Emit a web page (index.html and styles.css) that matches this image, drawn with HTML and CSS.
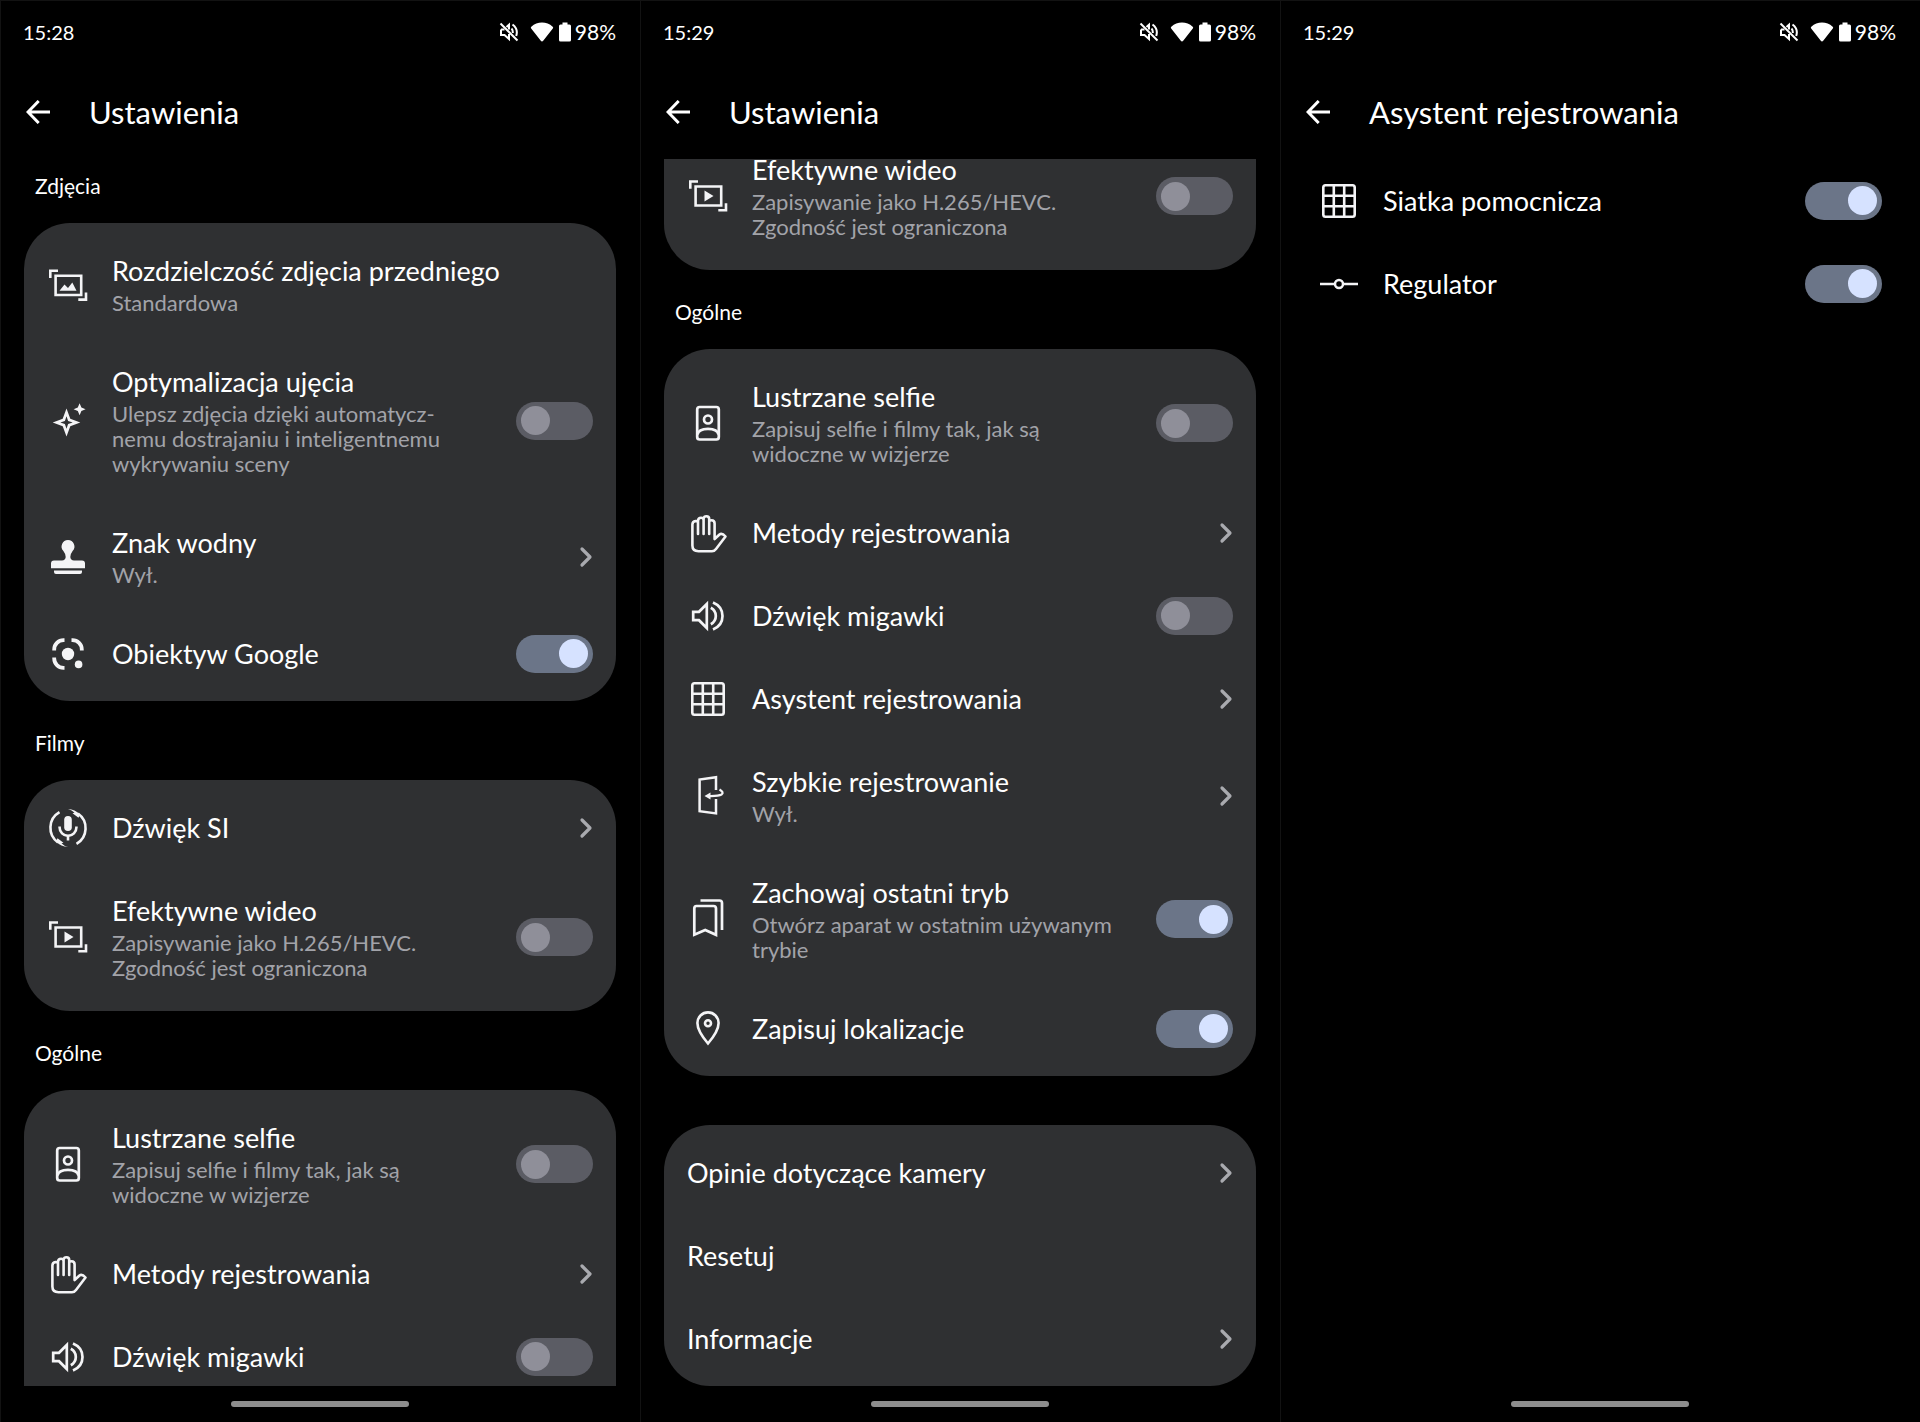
FILE: index.html
```html
<!DOCTYPE html>
<html lang="pl">
<head>
<meta charset="utf-8">
<meta name="viewport" content="width=device-width, initial-scale=1">
<title>Ustawienia aparatu</title>
<link rel="stylesheet" href="styles.css">
</head>
<body>
<svg class="sprite" aria-hidden="true">
  <symbol id="mute" viewBox="0 0 20 20"><g fill="none" stroke="currentColor" stroke-width="2"><path d="M2 7.500V13H5.500L10 17V12M2 7.500H5.500M7.500 5L10 2.800V7.500M12.500 6.500Q14 8 13.800 11M13.500 2.500Q19.500 7 17.200 14"/><path d="M1.500 1.500L18.500 18.500"/></g></symbol>
  <symbol id="wifi" viewBox="0 0 24 20"><path fill="currentColor" d="M12 19.500Q11.300 19.500 10.800 18.800L1 6.300Q.5 5.400 1.300 4.700Q6 .5 12 .5T22.700 4.700Q23.500 5.400 23 6.300L13.200 18.800Q12.700 19.500 12 19.500Z"/></symbol>
  <symbol id="battery" viewBox="0 0 12 20"><path fill="currentColor" d="M3.500 .5H8.500V2.500H10.500Q12 2.500 12 4V18Q12 19.500 10.500 19.500H1.500Q0 19.500 0 18V4Q0 2.500 1.500 2.500H3.500Z"/></symbol>
  <symbol id="back" viewBox="0 0 24 24"><path fill="none" stroke="currentColor" stroke-width="3" d="M24 12H2.500M12.700 1L2 12L12.700 23"/></symbol>
  <symbol id="chevron" viewBox="0 0 14 22"><path fill="none" stroke="currentColor" stroke-width="3.200" stroke-linecap="round" stroke-linejoin="round" d="M3 3L11 11L3 19"/></symbol>
  <symbol id="photo" viewBox="0 0 48 48"><g fill="none" stroke="currentColor" stroke-width="2.600"><path d="M11.600 14.800H37.200V34H11.600Z"/><path d="M14 9.800H6.300V17M42 31.500V38.600H34.300"/></g><path fill="currentColor" d="M15.500 29.800L20.500 23.500L24 27L28.300 21.500L32.500 29.800Z"/></symbol>
  <symbol id="video" viewBox="0 0 48 48"><g fill="none" stroke="currentColor" stroke-width="2.600"><path d="M11.600 14.500H37.200V33.500H11.600Z"/><path d="M14 9.500H6.300V16.700M42 31.200V38.300H34.300"/></g><path fill="currentColor" d="M20.500 18.600L29.500 24L20.500 29.400Z"/></symbol>
  <symbol id="sparkle" viewBox="0 0 48 48"><path fill="currentColor" fill-rule="evenodd" d="M22.500 11.500L26.300 21.700L36.300 25.500L26.300 29.300L22.500 39.500L18.700 29.300L8.700 25.500L18.700 21.700ZM22.500 19.200L20.900 23.900L16.300 25.500L20.900 27.100L22.500 31.800L24.100 27.100L28.700 25.500L24.100 23.900Z"/><path fill="currentColor" d="M35.600 6.300L37.400 10.500L41.600 12.300L37.400 14.100L35.600 18.300L33.800 14.100L29.600 12.300L33.800 10.500Z"/></symbol>
  <symbol id="stamp" viewBox="0 0 48 48"><path fill="currentColor" d="M24 7A6.500 6.500 0 0 1 28.600 18Q26 21.500 26.300 24Q26.600 27.300 30 27.600H38Q41 27.600 41 30.600V35.200H7V30.600Q7 27.600 10 27.600H18Q21.400 27.300 21.700 24Q22 21.500 19.400 18A6.500 6.500 0 0 1 24 7ZM10 37.500H38V39Q38 41 36 41H12Q10 41 10 39Z"/></symbol>
  <symbol id="lens" viewBox="0 0 48 48"><g fill="none" stroke="currentColor" stroke-width="3.800"><path d="M20.500 10.200H19.500A9.300 9.300 0 0 0 10.200 19.500V20.500M27.500 10.200H28.500A9.300 9.300 0 0 1 37.800 19.500V20.500M10.200 27.500V28.500A9.300 9.300 0 0 0 19.500 37.800H20.500"/></g><circle cx="24" cy="24" r="6.200" fill="currentColor"/><circle cx="34.600" cy="34.400" r="3.800" fill="currentColor"/></symbol>
  <symbol id="mic" viewBox="0 0 48 48"><rect x="20.200" y="12" width="7.600" height="15" rx="3.800" fill="currentColor"/><g fill="none" stroke="currentColor" stroke-width="2.600"><path d="M15.600 22.500V23.500A8.400 8.400 0 0 0 32.400 23.500V22.500M24 31.500V36.500"/><path d="M15.500 8.200A18 18 0 0 0 14 38.500M32.500 39.800A18 18 0 0 0 34 9.500"/></g><path fill="currentColor" d="M24 5Q31 5.200 36 10.500L34.500 13.800L28.500 9.200L30.500 8.800Q28 6 24 5ZM24 43Q17 42.800 12 37.500L13.500 34.200L19.500 38.800L17.500 39.200Q20 42 24 43Z"/></symbol>
  <symbol id="selfie" viewBox="0 0 48 48"><g fill="none" stroke="currentColor" stroke-width="2.700"><rect x="13.200" y="8" width="21.600" height="32.500" rx="2.500"/><circle cx="24" cy="20.500" r="4"/><path d="M13.500 35.500Q14.500 29.800 24 29.800T34.500 35.500"/></g></symbol>
  <symbol id="hand" viewBox="0 0 48 48"><path fill="none" stroke="currentColor" stroke-width="2.600" stroke-linecap="round" stroke-linejoin="round" d="M14 25V12.500Q13.800 12 11.500 12Q8.400 12.500 8.400 15.500V36.500Q8.400 42.200 14.500 42.200H28Q30.500 42.200 32 40L41.500 27.500Q38 23.500 35.500 25.500L30.600 30V14.500Q30.600 11.300 27.500 11.300Q25.400 11.300 25.200 12.500V25M14 14V11.500Q14.300 8.800 17 8.800Q19.500 8.800 19.600 11V25M19.600 11V9.500Q20 7.200 22.400 7.200Q25.200 7.200 25.200 10V13"/></symbol>
  <symbol id="speaker" viewBox="0 0 48 48"><g fill="none" stroke="currentColor" stroke-width="2.700"><path d="M9.200 19.800H15L22.800 12V36L15 28.200H9.200Z"/><path d="M26.800 15.800Q31.800 18.500 31.800 24T26.800 32.200M29 10.500Q38.500 14.500 38.500 24T29 37.500"/></g></symbol>
  <symbol id="grid" viewBox="0 0 48 48"><path fill="none" stroke="currentColor" stroke-width="2.600" d="M10.500 8.300H37.500Q39.700 8.300 39.700 10.500V37.500Q39.700 39.700 37.500 39.700H10.500Q8.300 39.700 8.300 37.500V10.500Q8.300 8.300 10.500 8.300ZM8.300 18.800H39.700M8.300 29.200H39.700M18.800 8.300V39.700M29.200 8.300V39.700"/></symbol>
  <symbol id="door" viewBox="0 0 48 48"><g fill="none" stroke="currentColor" stroke-width="2.500"><path d="M32 18V5.300L15.600 7.600V39.200L32 41.400V27"/><path stroke-width="2.200" d="M35.500 17.500Q40.500 20.500 37.500 22.500Q34.500 24.300 24 24"/></g><path fill="currentColor" d="M20.500 24L26.500 20.500V27.500Z"/></symbol>
  <symbol id="bookmark" viewBox="0 0 48 48"><g fill="none" stroke="currentColor" stroke-width="2.700"><path d="M16.500 5.500H35.500Q38 5.500 38 8V35"/><path d="M12.500 11H29.500Q32 11 32 13.500V39.800L21.200 35L10.300 39.800V13.500Q10.300 11 12.500 11Z"/></g></symbol>
  <symbol id="pin" viewBox="0 0 48 48"><g fill="none" stroke="currentColor" stroke-width="2.600"><path d="M24 38.500Q13.400 26 13.400 18A10.600 10.600 0 0 1 34.600 18Q34.600 26 24 38.500Z"/><circle cx="24" cy="18.300" r="3"/></g></symbol>
  <symbol id="slider" viewBox="0 0 48 48"><g fill="none" stroke="currentColor" stroke-width="2.500"><path d="M5 24H20M28 24H43"/><circle cx="24" cy="24" r="4"/></g></symbol>
</svg>

<main class="screens">
  <section class="screen">
    <div class="status">
      <time>15:28</time>
      <div class="status-icons"><svg class="i-mute"><use href="#mute"/></svg><svg class="i-wifi"><use href="#wifi"/></svg><svg class="i-battery"><use href="#battery"/></svg><span>98%</span></div>
    </div>
    <header class="topbar"><button class="back" type="button" aria-label="Wstecz"><svg><use href="#back"/></svg></button><h1>Ustawienia</h1></header>
    <div class="list">
      <h2 class="label label--first">Zdjęcia</h2>
      <div class="card">
        <a class="row" href="#resolution"><svg class="icon"><use href="#photo"/></svg><span class="text"><span class="name">Rozdzielczość zdjęcia przedniego</span><span class="sub">Standardowa</span></span></a>
        <label class="row"><svg class="icon"><use href="#sparkle"/></svg><span class="text"><span class="name">Optymalizacja ujęcia</span><span class="sub">Ulepsz zdjęcia dzięki automatycz-<br>nemu dostrajaniu i inteligentnemu<br>wykrywaniu sceny</span></span><input class="toggle" type="checkbox" role="switch"></label>
        <a class="row" href="#watermark"><svg class="icon"><use href="#stamp"/></svg><span class="text"><span class="name">Znak wodny</span><span class="sub">Wył.</span></span><svg class="chevron"><use href="#chevron"/></svg></a>
        <label class="row"><svg class="icon"><use href="#lens"/></svg><span class="text"><span class="name">Obiektyw Google</span></span><input class="toggle" type="checkbox" role="switch" checked></label>
      </div>
      <h2 class="label">Filmy</h2>
      <div class="card">
        <a class="row" href="#ai-sound"><svg class="icon"><use href="#mic"/></svg><span class="text"><span class="name">Dźwięk SI</span></span><svg class="chevron"><use href="#chevron"/></svg></a>
        <label class="row"><svg class="icon"><use href="#video"/></svg><span class="text"><span class="name">Efektywne wideo</span><span class="sub">Zapisywanie jako H.265/HEVC.<br>Zgodność jest ograniczona</span></span><input class="toggle" type="checkbox" role="switch"></label>
      </div>
      <h2 class="label">Ogólne</h2>
      <div class="card card--continues">
        <label class="row"><svg class="icon"><use href="#selfie"/></svg><span class="text"><span class="name">Lustrzane selfie</span><span class="sub">Zapisuj selfie i filmy tak, jak są<br>widoczne w wizjerze</span></span><input class="toggle" type="checkbox" role="switch"></label>
        <a class="row" href="#methods"><svg class="icon"><use href="#hand"/></svg><span class="text"><span class="name">Metody rejestrowania</span></span><svg class="chevron"><use href="#chevron"/></svg></a>
        <label class="row"><svg class="icon"><use href="#speaker"/></svg><span class="text"><span class="name">Dźwięk migawki</span></span><input class="toggle" type="checkbox" role="switch"></label>
      </div>
    </div>
    <div class="home"></div>
  </section>

  <section class="screen">
    <div class="status">
      <time>15:29</time>
      <div class="status-icons"><svg class="i-mute"><use href="#mute"/></svg><svg class="i-wifi"><use href="#wifi"/></svg><svg class="i-battery"><use href="#battery"/></svg><span>98%</span></div>
    </div>
    <header class="topbar"><button class="back" type="button" aria-label="Wstecz"><svg><use href="#back"/></svg></button><h1>Ustawienia</h1></header>
    <div class="list">
      <div class="card card--scrolled">
        <label class="row"><svg class="icon"><use href="#video"/></svg><span class="text"><span class="name">Efektywne wideo</span><span class="sub">Zapisywanie jako H.265/HEVC.<br>Zgodność jest ograniczona</span></span><input class="toggle" type="checkbox" role="switch"></label>
      </div>
      <h2 class="label">Ogólne</h2>
      <div class="card">
        <label class="row"><svg class="icon"><use href="#selfie"/></svg><span class="text"><span class="name">Lustrzane selfie</span><span class="sub">Zapisuj selfie i filmy tak, jak są<br>widoczne w wizjerze</span></span><input class="toggle" type="checkbox" role="switch"></label>
        <a class="row" href="#methods"><svg class="icon"><use href="#hand"/></svg><span class="text"><span class="name">Metody rejestrowania</span></span><svg class="chevron"><use href="#chevron"/></svg></a>
        <label class="row"><svg class="icon"><use href="#speaker"/></svg><span class="text"><span class="name">Dźwięk migawki</span></span><input class="toggle" type="checkbox" role="switch"></label>
        <a class="row" href="#assistant"><svg class="icon"><use href="#grid"/></svg><span class="text"><span class="name">Asystent rejestrowania</span></span><svg class="chevron"><use href="#chevron"/></svg></a>
        <a class="row" href="#quick"><svg class="icon"><use href="#door"/></svg><span class="text"><span class="name">Szybkie rejestrowanie</span><span class="sub">Wył.</span></span><svg class="chevron"><use href="#chevron"/></svg></a>
        <label class="row"><svg class="icon"><use href="#bookmark"/></svg><span class="text"><span class="name">Zachowaj ostatni tryb</span><span class="sub">Otwórz aparat w ostatnim używanym<br>trybie</span></span><input class="toggle" type="checkbox" role="switch" checked></label>
        <label class="row"><svg class="icon"><use href="#pin"/></svg><span class="text"><span class="name">Zapisuj lokalizacje</span></span><input class="toggle" type="checkbox" role="switch" checked></label>
      </div>
      <div class="card card--plain">
        <a class="row" href="#feedback"><span class="text"><span class="name">Opinie dotyczące kamery</span></span><svg class="chevron"><use href="#chevron"/></svg></a>
        <a class="row" href="#reset"><span class="text"><span class="name">Resetuj</span></span></a>
        <a class="row" href="#about"><span class="text"><span class="name">Informacje</span></span><svg class="chevron"><use href="#chevron"/></svg></a>
      </div>
    </div>
    <div class="home"></div>
  </section>

  <section class="screen">
    <div class="status">
      <time>15:29</time>
      <div class="status-icons"><svg class="i-mute"><use href="#mute"/></svg><svg class="i-wifi"><use href="#wifi"/></svg><svg class="i-battery"><use href="#battery"/></svg><span>98%</span></div>
    </div>
    <header class="topbar"><button class="back" type="button" aria-label="Wstecz"><svg><use href="#back"/></svg></button><h1>Asystent rejestrowania</h1></header>
    <div class="list list--bare">
      <label class="row"><svg class="icon"><use href="#grid"/></svg><span class="text"><span class="name">Siatka pomocnicza</span></span><input class="toggle" type="checkbox" role="switch" checked></label>
      <label class="row"><svg class="icon"><use href="#slider"/></svg><span class="text"><span class="name">Regulator</span></span><input class="toggle" type="checkbox" role="switch" checked></label>
    </div>
    <div class="home"></div>
  </section>
</main>
</body>
</html>
```
FILE: styles.css
```css
* { box-sizing: border-box; }

body {
  margin: 0;
  background: #000;
  color: #fff;
  font-family: Lato, "Noto Sans", sans-serif;
}

svg { display: block; flex: none; }
.sprite { position: absolute; width: 0; height: 0; }

.screens {
  display: grid;
  grid-template-columns: repeat(3, minmax(0, 1fr));
  height: 100vh;
}

.screen {
  display: flex;
  flex-direction: column;
  min-height: 0;
  box-shadow: inset 1px 1px #121212;
}

.status {
  display: flex;
  justify-content: space-between;
  align-items: center;
  height: 64px;
  padding: 0 24px 0 23px;
  font-size: 21px;
  line-height: 26px;
}
.status time { font-size: 20px; }
.status-icons { display: flex; align-items: center; }
.i-mute { width: 20px; height: 20px; margin-right: 11px; }
.i-wifi { width: 24px; height: 20px; margin-right: 5px; }
.i-battery { width: 12px; height: 20px; margin-right: 4px; }

.topbar {
  display: flex;
  align-items: center;
  gap: 39px;
  height: 95px;
  padding: 0 26px;
}
.back {
  padding: 0;
  border: 0;
  background: none;
  color: inherit;
}
.back svg { width: 24px; height: 24px; }
h1 {
  margin: 0;
  font-size: 31px;
  font-weight: 400;
  line-height: 36px;
}

.list {
  flex: 1;
  min-height: 0;
  padding: 0 24px;
  overflow-y: auto;
  scrollbar-width: none;
}
.list--bare { padding: 0 15px; }

.label {
  margin: 0;
  padding: 29px 11px 24px;
  font-size: 21px;
  font-weight: 400;
  line-height: 26px;
}
.label--first { padding-top: 14px; }

.card {
  padding: 6px 0;
  border-radius: 46px;
  background: #2f3032;
}
.card--continues { border-radius: 46px 46px 0 0; }
.card--scrolled {
  margin-top: -31px;
  padding-top: 0;
  border-radius: 0 0 46px 46px;
}
.card--plain { margin-top: 49px; }
.card--plain .row { padding-left: 23px; }

.row {
  display: flex;
  align-items: center;
  gap: 20px;
  padding: 25px 23px 25px 20px;
  color: inherit;
  text-decoration: none;
}
.icon { width: 48px; height: 48px; margin: -8px 0; color: #f4f4f6; }
.text {
  display: flex;
  flex: 1;
  flex-direction: column;
  gap: 3px;
  min-width: 0;
}
.name { font-size: 27px; line-height: 33px; }
.sub { color: #a2a3a9; font-size: 22px; line-height: 25px; }

.chevron { width: 14px; height: 22px; color: #a9aaaf; }

.toggle {
  display: flex;
  flex: none;
  align-items: center;
  width: 77px;
  height: 38px;
  margin: -3px 0;
  padding: 0 5px;
  border-radius: 19px;
  background: #5b5c64;
  appearance: none;
}
.toggle::before {
  width: 29px;
  height: 29px;
  border-radius: 50%;
  background: #8f8f99;
  content: "";
}
.toggle:checked { justify-content: flex-end; background: #6b7588; }
.toggle:checked::before { background: #d6e2ff; }

.home { height: 36px; padding-top: 15px; }
.home::before {
  display: block;
  width: 178px;
  height: 6px;
  margin: 0 auto;
  border-radius: 3px;
  background: #8e8e8e;
  content: "";
}
```
